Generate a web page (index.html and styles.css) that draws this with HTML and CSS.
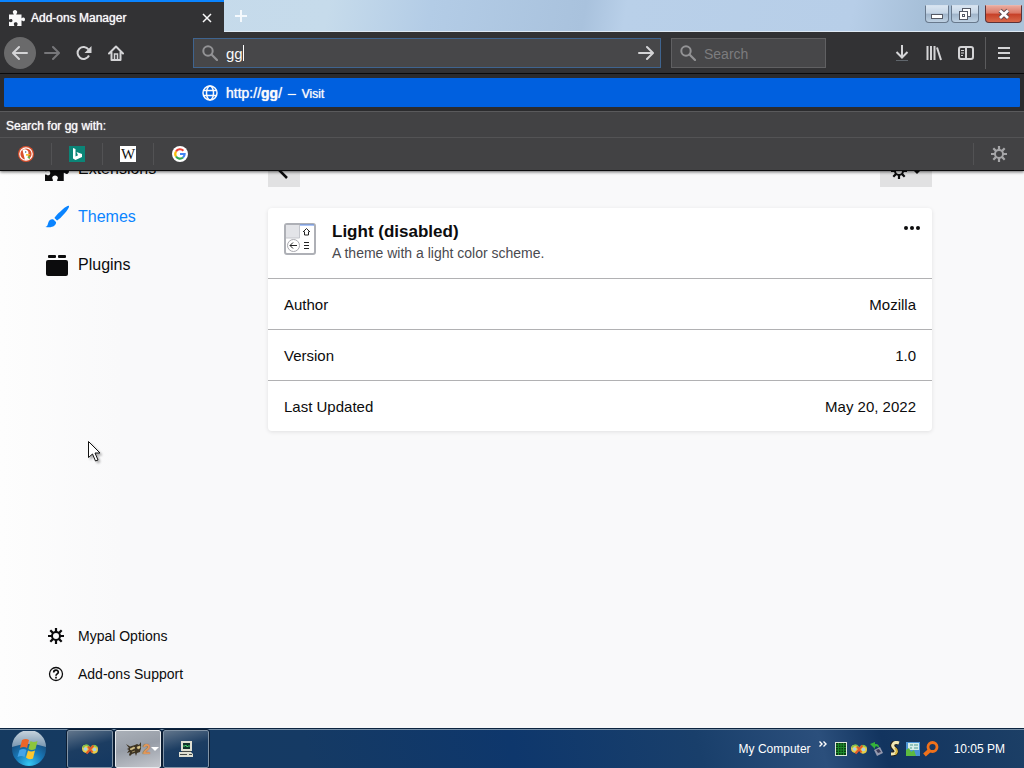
FILE: index.html
```html
<!DOCTYPE html>
<html lang="en">
  <head>
    <meta charset="UTF-8">
    <meta name="viewport" content="width=device-width, initial-scale=1.0">
    <title>Add-ons Manager</title>
    <link rel="stylesheet" href="styles.css">
  </head>
  <body>
    <!-- shared icons -->
    <svg class="icon-defs" aria-hidden="true">
      <symbol id="puzzle" viewBox="0 0 16 16">
        <path d="M0 4.500h4.800C4.800 3.800 3.800 3.400 3.800 2.100 3.800 1 4.700 0 6 0s2.200 1 2.200 2.100c0 1.300-1 1.700-1 2.400H12.500v3.700c.6.200 1-.7 2-.7.900 0 1.500.8 1.500 1.900s-.6 1.900-1.500 1.900c-1 0-1.400-.9-2-.7V16H8.200c-.4-.8.400-1.200.4-2.100 0-1-.8-1.600-1.900-1.600s-1.900.6-1.900 1.600c0 .9.800 1.300.4 2.100H0v-4.200c.8-.4 1.200.4 2 .4.900 0 1.500-.7 1.500-1.600S2.900 9 2 9c-.8 0-1.200.8-2 .4z"/>
      </symbol>
      <symbol id="gear" viewBox="0 0 16 16">
        <circle cx="8" cy="8" r="4" fill="none" stroke="currentColor" stroke-width="2"/>
        <path d="M8 0v4M8 12v4M0 8h4M12 8h4M2.300 2.300l2.600 2.600M11.100 11.100l2.600 2.600M2.300 13.700l2.600-2.600M11.100 4.900l2.600-2.600" stroke="currentColor" stroke-width="2.200"/>
      </symbol>
      <symbol id="glass" viewBox="0 0 16 16">
        <circle cx="6" cy="6" r="4.700" fill="none" stroke="currentColor" stroke-width="2"/>
        <path d="M9.500 9.500l5.500 5.500" stroke="currentColor" stroke-width="2.200" stroke-linecap="round"/>
      </symbol>
      <symbol id="arrow" viewBox="0 0 16 16">
        <path d="M1 8h13.500M9 2l6 6-6 6" fill="none" stroke="currentColor" stroke-width="2" stroke-linecap="round" stroke-linejoin="round"/>
      </symbol>
      <symbol id="wings" viewBox="0 0 16 16">
        <path d="M8 8C6 2 0 3 0 7.500c0 3 2 4 4 4.500 2 1 3-1 4-4z" fill="#e6cf4a"/>
        <path d="M8 8c1-5 8-5 8 0 0 3-1 4-3 4.500-3 1-4-1.500-5-4.500z" fill="#e6cf4a"/>
        <path d="M1 6.500Q4 2 7.500 6M9 6q3-3 6 0" stroke="#79c24e" stroke-width="1.500" fill="none"/>
        <circle cx="3.500" cy="8" r="1.800" fill="#a9cfe9"/>
        <circle cx="12.500" cy="8.500" r="1.800" fill="#a9cfe9"/>
        <path d="M4.500 12.500l7-8M6 5.500l4.500 6" stroke="#e2582a" stroke-width="2"/>
      </symbol>
    </svg>

    <header class="browser">
      <div class="titlebar">
        <div class="tab">
          <svg class="icon"><use href="#puzzle"/></svg>
          <span class="tab-title">Add-ons Manager</span>
          <button type="button" class="tab-close" aria-label="Close tab">
            <svg viewBox="0 0 10 10"><path d="M1 1l8 8M9 1l-8 8" stroke="currentColor" stroke-width="1.500"/></svg>
          </button>
        </div>
        <button type="button" class="new-tab" aria-label="New tab">
          <svg viewBox="0 0 12 12"><path d="M6 0v12M0 6h12" stroke="currentColor" stroke-width="2"/></svg>
        </button>
        <div class="window-buttons">
          <button type="button" class="win-button minimize" aria-label="Minimize">
            <svg viewBox="0 0 14 14"><rect x="1.500" y="7.500" width="11" height="4" fill="#fff" stroke="#555a66"/></svg>
          </button>
          <button type="button" class="win-button restore" aria-label="Restore">
            <svg viewBox="0 0 14 14"><g fill="#fff" stroke="#555a66"><rect x="4.500" y="1.500" width="8" height="8"/><rect x="1.500" y="4.500" width="8" height="8"/><rect x="4.500" y="7.500" width="2" height="2"/></g></svg>
          </button>
          <button type="button" class="win-button close" aria-label="Close">
            <svg viewBox="0 0 14 14"><path d="M3 3.500l8 7.500M11 3.500L3 11" stroke="#5c4a4f" stroke-width="4.500"/><path d="M3 3.500l8 7.500M11 3.500L3 11" stroke="#fff" stroke-width="2.800"/></svg>
          </button>
        </div>
      </div>

      <div class="toolbar">
        <button type="button" class="tool back" aria-label="Back"><svg class="icon flip"><use href="#arrow"/></svg></button>
        <button type="button" class="tool forward" aria-label="Forward" disabled><svg class="icon"><use href="#arrow"/></svg></button>
        <button type="button" class="tool" aria-label="Reload">
          <svg class="icon" viewBox="0 0 16 16"><path d="M13 10.500A6 6 0 1 1 12.500 4.500" fill="none" stroke="currentColor" stroke-width="2"/><path d="M15.500 1v7h-7z" fill="currentColor"/></svg>
        </button>
        <button type="button" class="tool" aria-label="Home">
          <svg class="icon" viewBox="0 0 16 16"><path d="M1 8.500L8 1.500l7 7M3.500 7.500V15h9V7.500" fill="none" stroke="currentColor" stroke-width="2" stroke-linejoin="round" stroke-linecap="round"/><path d="M6.500 15V9h3v6" fill="none" stroke="currentColor" stroke-width="1.500"/></svg>
        </button>
        <div class="field url-field">
          <svg class="icon"><use href="#glass"/></svg>
          <input type="text" class="url-input" value="gg" aria-label="Search or enter address">
          <button type="button" class="go" aria-label="Go"><svg class="icon"><use href="#arrow"/></svg></button>
        </div>
        <div class="field search-field">
          <svg class="icon"><use href="#glass"/></svg>
          <input type="text" placeholder="Search" aria-label="Search">
        </div>
        <div class="tools-end">
          <button type="button" class="tool" aria-label="Downloads">
            <svg class="icon" viewBox="0 0 16 16"><path d="M8 0v12M2.500 7L8 12.500 13.500 7" fill="none" stroke="currentColor" stroke-width="2"/><path d="M2 15.500h12" stroke="#60666c"/></svg>
          </button>
          <button type="button" class="tool" aria-label="Library">
            <svg class="icon" viewBox="0 0 16 16"><path d="M1.500 1v14M5 1v14M8.500 1v14M11 2.500l4 12.500" stroke="currentColor" stroke-width="2"/></svg>
          </button>
          <button type="button" class="tool" aria-label="Sidebars">
            <svg class="icon" viewBox="0 0 16 16"><rect x="1" y="2" width="14" height="12" rx="2" fill="none" stroke="currentColor" stroke-width="2"/><path d="M8 2v12" stroke="currentColor" stroke-width="2"/><path d="M3 5.500h3M3 8h3M3 10.500h2" stroke="currentColor"/></svg>
          </button>
          <button type="button" class="tool menu" aria-label="Menu">
            <svg class="icon" viewBox="0 0 16 16"><path d="M2 3h12M2 8h12M2 13h12" stroke="currentColor" stroke-width="2"/></svg>
          </button>
        </div>
      </div>

      <!-- address bar popup -->
      <div class="popup">
        <a class="suggestion" href="#">
          <svg class="icon" viewBox="0 0 16 16"><g fill="none" stroke="currentColor" stroke-width="1.500"><circle cx="8" cy="8" r="7"/><ellipse cx="8" cy="8" rx="3.500" ry="7"/><path d="M1.500 5.500h13M1.500 10.500h13"/></g></svg>
          <span>http://<b>gg</b>/</span>
          <span class="dash">–</span>
          <span class="action">Visit</span>
        </a>
        <div class="one-off-title">Search for gg with:</div>
        <div class="one-off">
          <button type="button" class="engine" aria-label="DuckDuckGo">
            <svg class="icon" viewBox="0 0 16 16"><circle cx="8" cy="8" r="8" fill="#d9502d"/><circle cx="8" cy="8" r="6.200" fill="none" stroke="#fff" stroke-width="1.200"/><path d="M4.500 4c2-1.500 6-.5 6 3l-.5 2 .8 4.500L7 14z" fill="#fff"/><path d="M8 8l4.500 0-2 1.700H8z" fill="#f5c330"/><path d="M9 11l3-1v3z" fill="#5fb846"/><circle cx="7.700" cy="6" r=".7" fill="#30506b"/></svg>
          </button>
          <button type="button" class="engine" aria-label="Bing">
            <svg class="icon" viewBox="0 0 16 16"><rect width="16" height="16" fill="#0b8577"/><path d="M4 2l2.500 1v7.500L9 9.200 7.500 6 13 8v3l-6.500 3L4 12.500z" fill="#fff"/></svg>
          </button>
          <button type="button" class="engine" aria-label="Wikipedia"><span class="wiki">W</span></button>
          <button type="button" class="engine" aria-label="Google">
            <svg class="icon" viewBox="0 0 16 16"><circle cx="8" cy="8" r="8" fill="#fff"/><g fill="none" stroke-width="2.200"><path d="M4 5.500A4.700 4.700 0 0 1 11.400 4.700" stroke="#ea4335"/><path d="M4 5.500a4.700 4.700 0 0 0 0 5" stroke="#fbbc05"/><path d="M4 10.500a4.700 4.700 0 0 0 7 1" stroke="#34a853"/><path d="M11 11.500A4.700 4.700 0 0 0 12.600 8H8" stroke="#4285f4"/></g></svg>
          </button>
          <button type="button" class="engine settings" aria-label="Change search settings"><svg class="icon"><use href="#gear"/></svg></button>
        </div>
      </div>
    </header>

    <div class="page">
      <nav class="sidebar">
        <a class="category" href="#"><svg><use href="#puzzle"/></svg>Extensions</a>
        <a class="category selected" href="#">
          <svg viewBox="0 0 24 24"><path d="M24 1c.6.700-1 3.500-4 7s-6.500 7-8 7.500L9.500 13C10 11.500 14 7.500 17.500 4.500S23.300.4 24 1zM8.500 14.500l2.500 2.500c.5 3-3 6.500-10.500 5 2.500-1 2-2.500 3-5s3-3.300 5-2.500z"/></svg>Themes
        </a>
        <a class="category" href="#">
          <svg viewBox="0 0 24 24"><rect x="1" y="7" width="22" height="16" rx="2"/><rect x="3" y="2" width="8" height="3" rx="1"/><rect x="13" y="2" width="8" height="3" rx="1"/></svg>Plugins
        </a>
        <div class="sidebar-footer">
          <a href="#"><svg class="icon"><use href="#gear"/></svg>Mypal Options</a>
          <a href="#">
            <svg class="icon" viewBox="0 0 16 16"><circle cx="8" cy="8" r="6.500" fill="none" stroke="currentColor" stroke-width="1.300"/><path d="M5.700 6.500C5.700 3.300 10.300 3.500 10.300 6.200 10.300 8 8 7.800 8 9.700M8 10.800v1.700" fill="none" stroke="currentColor" stroke-width="1.700"/></svg>Add-ons Support
          </a>
        </div>
      </nav>

      <main class="content">
        <div class="heading">
          <button type="button" class="heading-button" aria-label="Go back">
            <svg class="icon" viewBox="0 0 16 16"><path d="M11 1L4 8l7 7" fill="none" stroke="currentColor" stroke-width="2.500"/></svg>
          </button>
          <button type="button" class="heading-button options" aria-label="Tools for all add-ons">
            <svg class="icon"><use href="#gear"/></svg>
            <svg class="caret" viewBox="0 0 8 8"><path d="M0 3l4 4 4-4z"/></svg>
          </button>
        </div>

        <article class="card">
          <div class="card-header">
            <svg class="theme-icon" viewBox="0 0 32 32">
              <rect x="1" y="1" width="30" height="30" rx="2" fill="#fff" stroke="#aeb0b6" stroke-width="2"/>
              <path d="M2 2h13v13H2z" fill="#e3e4e8"/>
              <path d="M2 15h13.500V2" fill="none" stroke="#c4c6cc"/>
              <path d="M16 2h14" stroke="#5d8ef0"/>
              <circle cx="9.500" cy="22.500" r="6" fill="#fff" stroke="#a9a9af"/>
              <path d="M6 22.500h7M9 19.500l-3 3 3 3M19 9l3.500-3.500L26 9M20.500 8.500V12h4V8.500M20 19.500h5M20 22.500h5M20 25.500h5" fill="none" stroke="#222"/>
            </svg>
            <div class="card-text">
              <h1>Light (disabled)</h1>
              <p>A theme with a light color scheme.</p>
            </div>
            <button type="button" class="more" aria-label="More options">
              <svg class="icon" viewBox="0 0 16 16"><circle cx="2" cy="7" r="2"/><circle cx="8" cy="7" r="2"/><circle cx="14" cy="7" r="2"/></svg>
            </button>
          </div>
          <dl class="details">
            <div class="row"><dt>Author</dt><dd>Mozilla</dd></div>
            <div class="row"><dt>Version</dt><dd>1.0</dd></div>
            <div class="row"><dt>Last Updated</dt><dd>May 20, 2022</dd></div>
          </dl>
        </article>
      </main>
    </div>

    <footer class="taskbar">
      <button type="button" class="start" aria-label="Start">
        <svg viewBox="0 0 36 36">
          <defs>
            <radialGradient id="orb" cx="50%" cy="95%" r="80%"><stop offset="0" stop-color="#36c8f4"/><stop offset=".5" stop-color="#1878b8"/><stop offset="1" stop-color="#174572"/></radialGradient>
            <linearGradient id="shine" x2="0" y2="1"><stop offset="0" stop-color="#cbd6df"/><stop offset="1" stop-color="#7896b0"/></linearGradient>
          </defs>
          <circle cx="18" cy="18" r="17" fill="url(#orb)"/>
          <path d="M1 16a17 17 0 0 1 34 0q-17-6-34 0z" fill="url(#shine)"/>
          <path d="M11 9q4-2 7 0l-2 8q-3-2-7 0z" fill="#ee6529"/>
          <path d="M19.500 10q3 2 7 0l-2 8q-4 2-7 0z" fill="#8cc63c"/>
          <path d="M8.500 19q4-2 7 0l-2 7q-3-2-7 0z" fill="#45a4e8"/>
          <path d="M17 19.500q3 2 7 0l-2 8q-4 2-7-1z" fill="#fdc72e"/>
        </svg>
      </button>
      <button type="button" class="task" aria-label="Explorer"><svg class="icon"><use href="#wings"/></svg></button>
      <button type="button" class="task active" aria-label="Mypal, 2 windows">
        <svg class="icon" viewBox="0 0 16 16"><path d="M0 3l4 2.500L9 4l2-1 2 1 2-3v6l-1 4-3 1-1 3-1-3-3 1-2 2-1-1 1-3-3 1 2-3-2-1 2-1z" fill="#3d3322"/><path d="M4 8l4-2 1 1-4 2zM11 6l3-1v2l-2 1zM6 11l3-1" fill="#d8c48a" stroke="#d8c48a" stroke-width=".6"/></svg>
        <span class="count">2</span>
        <svg class="caret" viewBox="0 0 8 8"><path d="M0 2h8L4 6z" fill="#fff"/></svg>
      </button>
      <button type="button" class="task" aria-label="System monitor">
        <svg class="icon" viewBox="0 0 16 16"><path d="M3 0h11v10H3zM1 11h12l2 2v3H1z" fill="#dfdfd2"/><path d="M5 2h7v6H5z" fill="#12332c"/><path d="M5 5h2l1-1 1 2 1-1h2" stroke="#49d66f" fill="none"/><path d="M2 13.500h7M11 13.500h3M4 10.500h9" stroke="#474a46"/></svg>
      </button>
      <div class="tray">
        <a href="#">My Computer</a>
        <button type="button" class="chevron" aria-label="Show more">
          <svg viewBox="0 0 8 6"><path d="M.5.500L3 3 .5 5.500M4.500.500L7 3 4.500 5.500" fill="none" stroke="currentColor" stroke-width="1.400"/></svg>
        </button>
        <div class="tray-icons">
          <svg class="icon" viewBox="0 0 16 16"><rect x="2.500" y="1.500" width="11" height="13" fill="#0b3d12" stroke="#dce8d8"/><path d="M3 4h10M3 6.500h10M3 9h10M3 11.500h10M5.500 2v12M8 2v12M10.500 2v12" stroke="#1d8b2b"/></svg>
          <svg class="icon"><use href="#wings"/></svg>
          <svg class="icon" viewBox="0 0 16 16"><path d="M1 3l5-2v2c4 0 4 2 4 4C8 5 7 5 6 6v2z" fill="#35b33b"/><path d="M5 9l6-3 3 6-6 3z" fill="#9499ae"/><path d="M7 9l3-1 2 3-3 1z" fill="#3a3b58"/></svg>
          <svg class="icon" viewBox="0 0 16 16"><path d="M12 2C7 0 4 4 7 7s3 6-3 6" fill="none" stroke="#262018" stroke-width="5"/><path d="M12 2C7 0 4 4 7 7s3 6-3 6" fill="none" stroke="#f0e7b4" stroke-width="3"/><path d="M8 7c3 2 2 5 0 6" fill="none" stroke="#d6b642" stroke-width="2"/></svg>
          <svg class="icon" viewBox="0 0 16 16"><path d="M1 1h14v14H1z" fill="#4b94d5"/><path d="M3 2h11v7H3z" fill="#d5edea"/><path d="M5 4h3M9 4h4M5 7h2M9 7h4" stroke="#4e9b8d"/><path d="M1 15V9l3-2 2 4 3-2 2 6z" fill="#5dbb3f"/></svg>
          <svg class="icon" viewBox="0 0 16 16"><circle cx="9.500" cy="6" r="4.500" fill="none" stroke="#ef711b" stroke-width="2.800"/><path d="M6.500 9.500L1.500 14" stroke="#ef711b" stroke-width="4"/></svg>
        </div>
        <time class="clock" datetime="22:05">10:05 PM</time>
      </div>
    </footer>

    <svg class="pointer" viewBox="0 0 12 21"><path d="M.5.500v16l4-3.500 3 7 2.500-1-3-7h5z" fill="#fff" stroke="#111"/></svg>
  </body>
</html>
```
FILE: styles.css
```css
* {
  box-sizing: border-box;
}

body {
  margin: 0;
  min-height: 100vh;
  display: flex;
  flex-direction: column;
  font-family: "Liberation Sans", Arial, sans-serif;
  color: #0c0c0d;
  background-color: #f9f9fa;
}

button {
  padding: 0;
  border: none;
  background: none;
  font: inherit;
  color: inherit;
  display: flex;
  align-items: center;
  justify-content: center;
}

a {
  color: inherit;
  text-decoration: none;
}

svg {
  flex: none;
  fill: currentColor;
}

.icon {
  width: 16px;
  height: 16px;
}

.icon-defs {
  position: absolute;
  width: 0;
  height: 0;
}

.flip {
  transform: rotate(180deg);
}

/* browser chrome */
.browser {
  position: relative;
  z-index: 1;
  color: #f9f9fa;
}

.titlebar {
  height: 32px;
  display: flex;
  background: linear-gradient(100deg, #c4d9ea 0, #c6dbeb 32%, #b3cce6 42%, #a9c2dd 57%, #b9d0e9 61%, #b7cee8 83%, #a6bfd8 90%, #abc3d9 100%);
  border-bottom: 1px solid #dfeaf4;
}

.tab {
  width: 224px;
  height: 32px;
  padding: 2px 12px 0 9px;
  border-top: 2px solid #0a84ff;
  background-color: #323234;
  display: flex;
  align-items: center;
  gap: 6px;
}

.tab-title {
  flex: 1;
  font-size: 12px;
  text-shadow: 0 0 1px #f9f9fa;
}

.tab-close svg {
  width: 10px;
  height: 10px;
}

.new-tab {
  width: 34px;
  color: #f4f9fd;
}

.new-tab svg {
  width: 12px;
  height: 12px;
}

.window-buttons {
  margin-left: auto;
  padding: 5px 2px 0 0;
  display: flex;
  align-items: flex-start;
}

.win-button {
  height: 18px;
  border: 1px solid #68798d;
  border-top-color: #d5e1ee;
  border-radius: 0 0 4px 4px;
  background: linear-gradient(#d9e5f1 0, #c5d5e6 45%, #9fb4ca 50%, #bed1e3 100%);
}

.win-button svg {
  width: 14px;
  height: 14px;
}

.minimize {
  width: 24px;
}

.restore {
  width: 28px;
  margin-left: 2px;
}

.close {
  width: 37px;
  margin-left: 6px;
  border-color: #5d3237;
  border-top-color: #eab5ab;
  background: linear-gradient(#e9a99c 0, #db7765 45%, #c63f27 50%, #d9694a 100%);
}

.toolbar {
  height: 42px;
  padding: 0 3px 0 4px;
  display: flex;
  align-items: center;
  background-color: #323234;
  border-bottom: 1px solid #0c0c0d;
}

.tool {
  width: 32px;
  height: 32px;
  color: #d4d4d6;
}

.back {
  border-radius: 50%;
  background-color: #6a6a6b;
}

.forward {
  color: #77777a;
}

.field {
  height: 30px;
  padding: 0 6px 0 8px;
  display: flex;
  align-items: center;
  gap: 8px;
  color: #939395;
  background-color: #474749;
  border: 1px solid #606062;
}

.field input {
  flex: 1;
  min-width: 0;
  padding: 2px 0 0;
  border: none;
  outline: none;
  background: none;
  color: #f9f9fa;
  font-family: inherit;
  font-size: 14px;
}

.field input::placeholder {
  color: #7c7c7e;
}

.url-field {
  flex: 1;
  margin-left: 61px;
  border-color: #3f648f;
}

/* text cursor after the typed letters */
.field .url-input {
  font-size: 15px;
  background: linear-gradient(#fff, #fff) 17px center / 1px 16px no-repeat;
}

.go {
  color: #d4d4d6;
}

.search-field {
  width: 155px;
  margin-left: 10px;
}

.tools-end {
  margin-left: 60px;
  display: flex;
}

.menu {
  width: 36px;
  margin-left: 3px;
  border-left: 1px solid #5b5b5d;
}

.popup {
  position: absolute;
  top: 100%;
  left: 0;
  right: 0;
  padding-top: 4px;
  background-color: #2b2b2d;
  border-bottom: 1px solid #0c0c0d;
  box-shadow: 0 1px 3px rgba(0, 0, 0, 0.6);
}

.suggestion {
  height: 29px;
  margin: 0 4px 4px;
  padding-left: 198px;
  display: flex;
  align-items: center;
  gap: 8px;
  border-radius: 1px;
  background-color: #0060df;
  font-size: 14px;
  text-shadow: 0 0 1px #f9f9fa;
}

.dash {
  margin-left: -2px;
}

.action {
  margin-left: -2px;
  padding-top: 2px;
  font-size: 12px;
}

.one-off-title {
  height: 26px;
  padding: 0 6px;
  border-top: 1px solid #5a5a5c;
  background-color: #424244;
  font-size: 12px;
  line-height: 28px;
  text-shadow: 0 0 1px #f9f9fa;
}

.one-off {
  height: 33px;
  padding-left: 1px;
  display: flex;
  align-items: center;
  background-color: #424244;
  border-top: 1px solid #535355;
}

.engine {
  width: 51px;
  height: 22px;
  border-right: 1px solid #525254;
}

.engine:nth-child(4) {
  border-right: none;
}

.settings {
  margin-left: auto;
  border-right: none;
  border-left: 1px solid #525254;
  color: #a6a6a8;
}

.wiki {
  width: 16px;
  height: 16px;
  background-color: #fff;
  color: #111;
  font-family: "Liberation Serif", serif;
  font-size: 15px;
  line-height: 16px;
}

/* add-ons page */
.page {
  flex: 1;
  display: flex;
  background: linear-gradient(to right, #fdfdfd 0, #f9f9fa 120px);
}

.sidebar {
  width: 268px;
  flex: none;
  padding: 71px 0 35px 45px;
  display: flex;
  flex-direction: column;
}

.category {
  height: 48px;
  display: flex;
  align-items: center;
  gap: 9px;
  font-size: 16px;
}

.category svg {
  width: 24px;
  height: 24px;
}

.selected {
  color: #0a84ff;
}

.sidebar-footer {
  margin-top: auto;
}

.sidebar-footer a {
  height: 38px;
  padding-left: 3px;
  display: flex;
  align-items: center;
  gap: 14px;
  font-size: 14px;
}

.content {
  flex: 1;
  max-width: 664px;
  padding-top: 81px;
}

.heading {
  display: flex;
  justify-content: space-between;
  margin-bottom: 21px;
}

.heading-button {
  width: 32px;
  height: 32px;
  background-color: #e1e1e2;
}

.options {
  width: 52px;
  gap: 6px;
}

.caret {
  width: 8px;
  height: 8px;
}

.card {
  background-color: #fff;
  border-radius: 4px;
  box-shadow: 0 1px 4px rgba(12, 12, 13, 0.1);
}

.card-header {
  height: 70px;
  padding: 13px 12px 0 16px;
  display: flex;
  align-items: flex-start;
  gap: 16px;
}

.theme-icon {
  width: 32px;
  height: 32px;
  margin-top: 2px;
}

.card-text {
  flex: 1;
}

.card h1 {
  margin: 0;
  font-size: 17px;
  line-height: 22px;
}

.card p {
  margin: 0;
  color: #4a4a4f;
  font-size: 14px;
  line-height: 20px;
}

.details {
  margin: 0;
  font-size: 15px;
}

.row {
  height: 51px;
  padding: 0 16px;
  display: flex;
  align-items: center;
  justify-content: space-between;
  border-top: 1px solid #b1b1b3;
}

.row dd {
  margin: 0;
}

/* taskbar */
.taskbar {
  height: 40px;
  padding-left: 11px;
  display: flex;
  align-items: center;
  gap: 2px;
  color: #fff;
  font-size: 12px;
  background: linear-gradient(75deg, #153a60 0, #153a64 30%, #0e376c 50%, #193f6b 68%, #2b4f7c 80%, #12345f 86%, #1c3f66 100%);
  border-top: 1px solid #0c2440;
  box-shadow: inset 0 1px #7890a7;
}

.start {
  margin-right: 18px;
}

.start svg {
  width: 36px;
  height: 36px;
}

.task {
  width: 46px;
  height: 38px;
  border: 1px solid #8194a7;
  border-radius: 2px;
  outline: 1px solid #0b1d33;
  background: linear-gradient(165deg, #61758b 0, #1c3d62 45%, #143861 100%);
}

.active {
  padding-left: 9px;
  gap: 1px;
  border-color: #e7eaed;
  background: linear-gradient(165deg, #aab0b8 0, #979da7 45%, #c5c8ce 100%);
}

.count {
  color: #e0985c;
  font-size: 14px;
  font-weight: bold;
  text-shadow: 0 0 1px #7a4a22;
}

.tray {
  flex: 1;
  padding-right: 19px;
  display: flex;
  align-items: center;
  justify-content: flex-end;
}

.chevron {
  align-self: flex-start;
  margin: 0 6px 0 8px;
}

.chevron svg {
  width: 8px;
  height: 6px;
}

.tray-icons {
  display: flex;
  gap: 2px;
  margin-right: 15px;
}

.pointer {
  position: absolute;
  left: 88px;
  top: 441px;
  width: 12px;
  height: 21px;
  filter: drop-shadow(2px 2px 1px rgba(0, 0, 0, 0.3));
}
```
